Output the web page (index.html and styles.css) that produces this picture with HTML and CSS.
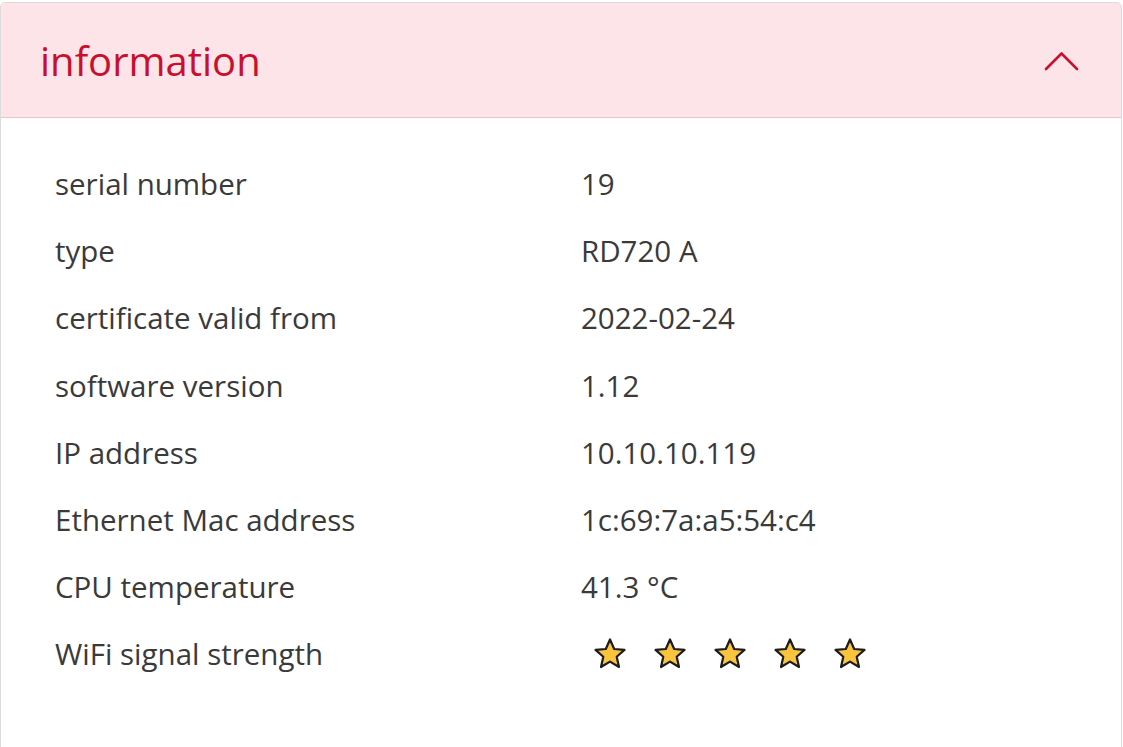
FILE: index.html
```html
<!DOCTYPE html>
<html lang="en">
<head>
<meta charset="utf-8">
<title>information</title>
<link rel="stylesheet" href="styles.css">
</head>
<body>
<section class="card">
  <header class="card-header">
    <h2 class="card-title">information</h2>
    <svg class="chevron" width="36" height="22" viewBox="0 0 36 22" aria-hidden="true">
      <path d="M2 19 L17.5 3.5 L33 19" fill="none" stroke="#c8102e" stroke-width="2.6" stroke-linecap="round" stroke-linejoin="round"/>
    </svg>
  </header>
  <div class="card-body">
    <dl class="info">
      <div class="row"><dt>serial number</dt><dd>19</dd></div>
      <div class="row"><dt>type</dt><dd>RD720 A</dd></div>
      <div class="row"><dt>certificate valid from</dt><dd>2022-02-24</dd></div>
      <div class="row"><dt>software version</dt><dd>1.12</dd></div>
      <div class="row"><dt>IP address</dt><dd>10.10.10.119</dd></div>
      <div class="row"><dt>Ethernet Mac address</dt><dd>1c:69:7a:a5:54:c4</dd></div>
      <div class="row"><dt>CPU temperature</dt><dd>41.3 °C</dd></div>
      <div class="row"><dt>WiFi signal strength</dt>
        <dd class="stars">
          <svg class="star" viewBox="0 0 34 34"><path d="M17 2.5 L21.2 12 L31.5 12.9 L23.7 19.8 L26 30 L17 24.6 L8 30 L10.3 19.8 L2.5 12.9 L12.8 12 Z"/></svg>
          <svg class="star" viewBox="0 0 34 34"><path d="M17 2.5 L21.2 12 L31.5 12.9 L23.7 19.8 L26 30 L17 24.6 L8 30 L10.3 19.8 L2.5 12.9 L12.8 12 Z"/></svg>
          <svg class="star" viewBox="0 0 34 34"><path d="M17 2.5 L21.2 12 L31.5 12.9 L23.7 19.8 L26 30 L17 24.6 L8 30 L10.3 19.8 L2.5 12.9 L12.8 12 Z"/></svg>
          <svg class="star" viewBox="0 0 34 34"><path d="M17 2.5 L21.2 12 L31.5 12.9 L23.7 19.8 L26 30 L17 24.6 L8 30 L10.3 19.8 L2.5 12.9 L12.8 12 Z"/></svg>
          <svg class="star" viewBox="0 0 34 34"><path d="M17 2.5 L21.2 12 L31.5 12.9 L23.7 19.8 L26 30 L17 24.6 L8 30 L10.3 19.8 L2.5 12.9 L12.8 12 Z"/></svg>
        </dd>
      </div>
    </dl>
  </div>
</section>
</body>
</html>
```
FILE: styles.css
```css
html, body {
  margin: 0;
  padding: 0;
  background: #ffffff;
}
body {
  font-family: "Open Sans", "Noto Sans", "Liberation Sans", sans-serif;
  color: #3a3a3a;
}
.card {
  margin-top: 2px;
  width: 1120px;
  height: 760px;
  border: 1px solid #dcdcdc;
  border-radius: 5px;
  overflow: hidden;
  background: #fff;
}
.card-header {
  height: 114px;
  background: #fce4e8;
  border-bottom: 1px solid #e6c4ca;
  display: flex;
  align-items: center;
  justify-content: space-between;
  padding: 0 41px 0 39px;
}
.card-title {
  margin: 0;
  font-weight: 400;
  font-size: 40px;
  color: #c8102e;
}
.chevron {
  display: block;
  margin-top: 1px;
}
.card-body {
  padding: 32px 0 0 54px;
}
.info {
  margin: 0;
}
.row {
  display: flex;
  align-items: center;
  height: 67.2px;
  font-size: 29.5px;
}
.row dt {
  width: 526px;
  flex: none;
}
.row dd {
  margin: 0;
}
.stars {
  display: flex;
  gap: 26px;
  padding-left: 12px;
  padding-top: 0;
}
.star {
  width: 34px;
  height: 34px;
  display: block;
}
.star path {
  fill: #fbc43f;
  stroke: #1c1c1c;
  stroke-width: 2.2;
  stroke-linejoin: round;
}
```
